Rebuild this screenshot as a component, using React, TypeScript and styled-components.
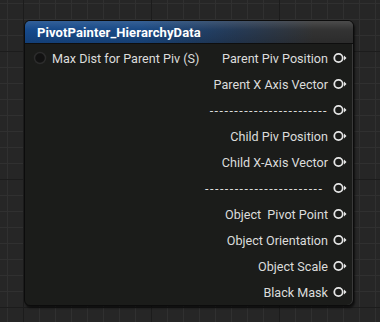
import styled, { createGlobalStyle } from "styled-components";

const GlobalStyle = createGlobalStyle`
  html, body {
    margin: 0;
    padding: 0;
    width: 380px;
    height: 322px;
    overflow: hidden;
  }
  body {
    font-family: Roboto, "Liberation Sans", sans-serif;
    background-color: #262626;
    background-image:
      linear-gradient(to right, #1c1c1c 1px, transparent 1px),
      linear-gradient(to bottom, #1c1c1c 1px, transparent 1px),
      linear-gradient(to right, #303030 1px, transparent 1px),
      linear-gradient(to bottom, #303030 1px, transparent 1px);
    background-size: 128px 128px, 128px 128px, 16px 16px, 16px 16px;
    background-position: 23px 51px, 23px 51px, 7px 3px, 7px 3px;
  }
`;

const Canvas = styled.div`
  width: 380px;
  height: 322px;
  padding: 20px 0 0 24px;
  box-sizing: border-box;
`;

const Node = styled.div`
  width: 330px;
  height: 286px;
  background: #1b1c1a;
  border-radius: 6px;
  border: 1px solid #0c0c0c;
  box-sizing: border-box;
  box-shadow: inset -1px 0 0 #3a3a3a, 1px 2px 2px rgba(0, 0, 0, 0.6);
  overflow: hidden;
  display: flex;
  flex-direction: column;
`;

const Header = styled.div`
  height: 22px;
  display: flex;
  align-items: center;
  padding-left: 12px;
  background:
    linear-gradient(to bottom, rgba(255, 255, 255, 0.12) 0, rgba(255, 255, 255, 0) 40%, rgba(0, 0, 0, 0.15) 100%),
    linear-gradient(to right, #164a8c 0%, #1a4a86 35%, #263a55 65%, #333333 88%, #333333 100%);
  border-bottom: 1px solid #0e0e0e;
  color: #ffffff;
  font-weight: 700;
  font-size: 13px;
  letter-spacing: 0.1px;
`;

const Body = styled.div`
  display: flex;
  justify-content: space-between;
  padding-top: 1px;
`;

const Column = styled.div<{ $align: "left" | "right" }>`
  display: flex;
  flex-direction: column;
  align-items: ${(p) => (p.$align === "left" ? "flex-start" : "flex-end")};
`;

const PinRow = styled.div<{ $side: "in" | "out" }>`
  height: 26px;
  display: flex;
  align-items: center;
  gap: 5px;
  flex-direction: ${(p) => (p.$side === "in" ? "row" : "row-reverse")};
  padding: ${(p) => (p.$side === "in" ? "0 0 0 8px" : "0 6px 0 0")};
  color: #dcdcdc;
  font-size: 12.6px;
  white-space: pre;
`;

const Divider = styled.span`
  letter-spacing: 1.45px;
`;

function InputPin() {
  return (
    <svg width="14" height="14" viewBox="0 0 14 14">
      <circle cx="7" cy="7" r="5.5" fill="#121212" stroke="#2c2c2c" strokeWidth="1.5" />
    </svg>
  );
}

function OutputPin() {
  return (
    <svg width="14" height="12" viewBox="0 0 14 12">
      <circle cx="5.5" cy="6" r="4.2" fill="none" stroke="#e6e6e6" strokeWidth="1.8" />
      <polygon points="11,3.5 13.5,6 11,8.5" fill="#e6e6e6" />
    </svg>
  );
}

const inputs = ["Max Dist for Parent Piv (S)"];

const outputs = [
  "Parent Piv Position",
  "Parent X Axis Vector",
  "------------------------",
  "Child Piv Position",
  "Child X-Axis Vector",
  "------------------------ ",
  "Object  Pivot Point",
  "Object Orientation",
  "Object Scale",
  "Black Mask",
];

export default function App() {
  return (
    <>
      <GlobalStyle />
      <Canvas>
        <Node>
          <Header>PivotPainter_HierarchyData</Header>
          <Body>
            <Column $align="left">
              {inputs.map((label) => (
                <PinRow key={label} $side="in">
                  <InputPin />
                  <span>{label}</span>
                </PinRow>
              ))}
            </Column>
            <Column $align="right">
              {outputs.map((label, i) => (
                <PinRow key={i} $side="out">
                  <OutputPin />
                  {label.startsWith("-") ? <Divider>{label}</Divider> : <span>{label}</span>}
                </PinRow>
              ))}
            </Column>
          </Body>
        </Node>
      </Canvas>
    </>
  );
}
